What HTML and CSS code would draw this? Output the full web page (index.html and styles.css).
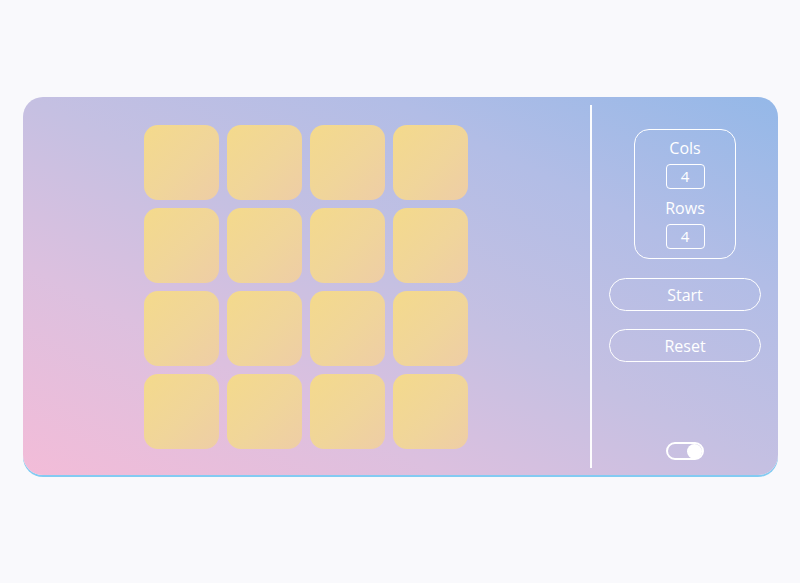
FILE: index.html
```html
<!DOCTYPE html>
<html lang="en">
<head>
<meta charset="utf-8">
<title>Puzzle</title>
<link rel="stylesheet" href="styles.css">
</head>
<body>
<main class="card">
  <section class="board">
    <div class="grid">
      <div class="tile"></div><div class="tile"></div><div class="tile"></div><div class="tile"></div>
      <div class="tile"></div><div class="tile"></div><div class="tile"></div><div class="tile"></div>
      <div class="tile"></div><div class="tile"></div><div class="tile"></div><div class="tile"></div>
      <div class="tile"></div><div class="tile"></div><div class="tile"></div><div class="tile"></div>
    </div>
  </section>
  <div class="divider"></div>
  <aside class="panel">
    <div class="size-box">
      <div class="label">Cols</div>
      <div class="num">4</div>
      <div class="label label-rows">Rows</div>
      <div class="num">4</div>
    </div>
    <button class="btn btn-start">Start</button>
    <button class="btn btn-reset">Reset</button>
    <div class="spacer"></div>
    <div class="toggle"><span class="knob"></span></div>
  </aside>
</main>
</body>
</html>
```
FILE: styles.css
```css
html, body {
  margin: 0;
  padding: 0;
}
body {
  background: #f9f9fc;
  font-family: "Open Sans", "Noto Sans", sans-serif;
  color: #fff;
  padding: 97px 22px 0 23px;
  height: 583px;
  box-sizing: border-box;
}
.card {
  height: 378px;
  border-radius: 20px;
  background: linear-gradient(to top right, #f3bcd8 0%, #dcc0df 28%, #c5c0e2 50%, #b2bde6 74%, #94b8e8 100%);
  box-shadow: 0 2px 0 rgba(110, 195, 240, 0.85);
  display: flex;
  overflow: hidden;
}
.board {
  flex: 1;
  display: flex;
  align-items: center;
  justify-content: center;
}
.grid {
  display: grid;
  grid-template-columns: repeat(4, 75px);
  grid-template-rows: repeat(4, 75px);
  gap: 8px;
  margin: 1px 1px 0 0;
}
.tile {
  border-radius: 14px;
  background: linear-gradient(135deg, #f4da8c 0%, #f0d59a 55%, #eecda6 100%);
}
.divider {
  width: 2px;
  background: rgba(255, 255, 255, 0.95);
  margin: 8px 0 7px;
}
.panel {
  width: 186px;
  display: flex;
  flex-direction: column;
  align-items: center;
  padding: 32px 0 15px;
  box-sizing: border-box;
}
.size-box {
  width: 102px;
  box-sizing: border-box;
  border: 1.5px solid #fff;
  border-radius: 15px;
  display: flex;
  flex-direction: column;
  align-items: center;
  padding: 7px 0 9px;
}
.label {
  font-size: 16px;
  line-height: 22px;
}
.label-rows {
  margin-top: 8px;
}
.num {
  margin-top: 5px;
  width: 39px;
  height: 25px;
  box-sizing: border-box;
  border: 1.5px solid #fff;
  border-radius: 4px;
  font-size: 15px;
  line-height: 22px;
  text-align: center;
}
.btn {
  font-family: inherit;
  color: #fff;
  background: transparent;
  border: 1.5px solid #fff;
  border-radius: 17px;
  width: 152px;
  height: 33px;
  font-size: 16px;
  padding: 0;
  line-height: 30px;
}
.btn-start {
  margin-top: 19px;
}
.btn-reset {
  margin-top: 18px;
}
.spacer {
  flex: 1;
}
.toggle {
  width: 38px;
  height: 18px;
  box-sizing: border-box;
  border: 2px solid #fff;
  border-radius: 9px;
  display: flex;
  align-items: center;
  justify-content: flex-end;
}
.knob {
  width: 15px;
  height: 15px;
  border-radius: 50%;
  background: #fff;
}
```
